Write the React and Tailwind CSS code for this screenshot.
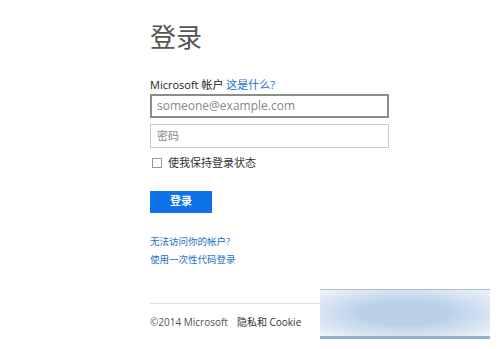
export default function App() {
  return (
    <div className="relative w-[500px] h-[349px] bg-white overflow-hidden font-['Open_Sans','Noto_Sans_CJK_SC',sans-serif]">
      <div className="pl-[150px] pt-[22px] w-[389px]">
        <h1 className="text-[26px] leading-[30px] text-[#555] font-normal">登录</h1>

        <div className="mt-[26px] text-[11px] leading-[14px] text-[#222]">
          Microsoft 帐户 <span className="text-[#1e6ec8]">这是什么?</span>
        </div>

        <div className="mt-[2px] h-[24px] border-2 border-[#8c8c8c] flex items-center px-[5px] text-[12px] text-[#888]">
          someone@example.com
        </div>
        <div className="mt-[6px] h-[24px] border border-[#c8c8c8] flex items-center px-[6px] text-[11px] text-[#888]">
          密码
        </div>

        <div className="mt-[7px] flex items-center gap-[6px] text-[11px] text-[#333]">
          <span className="w-[10px] h-[10px] border border-[#999] bg-white ml-[2px]" />
          使我保持登录状态
        </div>

        <button className="mt-[19px] w-[62px] h-[22px] bg-[#0f72e8] text-white text-[11px] font-bold flex items-center justify-center">
          登录
        </button>

        <div className="mt-[23px] flex flex-col gap-[6px] text-[9.5px] leading-[12px] text-[#1e6ec8]">
          <span>无法访问你的帐户?</span>
          <span>使用一次性代码登录</span>
        </div>

        <div className="mt-[37px] border-t border-[#e0e0e0] w-[200px]" />

        <div className="mt-[11px] flex items-center gap-[9px] text-[10px] text-[#555]">
          <span>©2014 Microsoft</span>
          <span className="text-[#333]">隐私和 Cookie</span>
        </div>
      </div>

      {/* blurred overlay bottom right */}
      <div className="absolute left-[320px] top-[289px] w-[170px] h-[50px] border-t border-[#a9bccc] border-b-[3px] border-b-[#93b2d3] bg-[radial-gradient(ellipse_at_center,#bad0e8_35%,#dfe9f4_80%,#f0f5fa_100%)]" />
    </div>
  )
}
